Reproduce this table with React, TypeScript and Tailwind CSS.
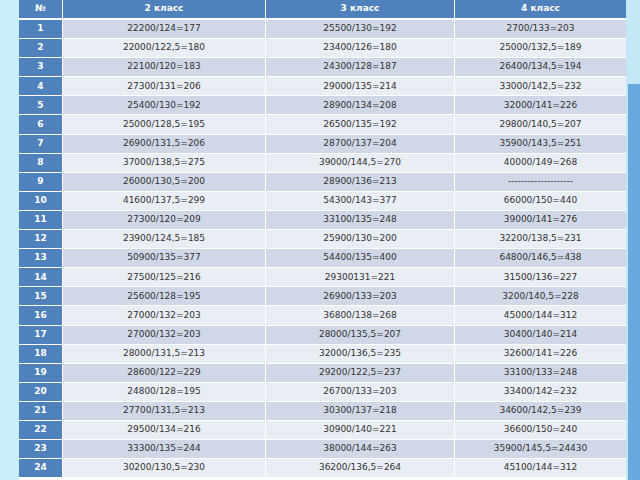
const rows: [string, string, string][] = [
  ["22200/124=177", "25500/130=192", "2700/133=203"],
  ["22000/122,5=180", "23400/126=180", "25000/132,5=189"],
  ["22100/120=183", "24300/128=187", "26400/134,5=194"],
  ["27300/131=206", "29000/135=214", "33000/142,5=232"],
  ["25400/130=192", "28900/134=208", "32000/141=226"],
  ["25000/128,5=195", "26500/135=192", "29800/140,5=207"],
  ["26900/131,5=206", "28700/137=204", "35900/143,5=251"],
  ["37000/138,5=275", "39000/144,5=270", "40000/149=268"],
  ["26000/130,5=200", "28900/136=213", "--------------------"],
  ["41600/137,5=299", "54300/143=377", "66000/150=440"],
  ["27300/120=209", "33100/135=248", "39000/141=276"],
  ["23900/124,5=185", "25900/130=200", "32200/138,5=231"],
  ["50900/135=377", "54400/135=400", "64800/146,5=438"],
  ["27500/125=216", "29300131=221", "31500/136=227"],
  ["25600/128=195", "26900/133=203", "3200/140,5=228"],
  ["27000/132=203", "36800/138=268", "45000/144=312"],
  ["27000/132=203", "28000/135,5=207", "30400/140=214"],
  ["28000/131,5=213", "32000/136,5=235", "32600/141=226"],
  ["28600/122=229", "29200/122,5=237", "33100/133=248"],
  ["24800/128=195", "26700/133=203", "33400/142=232"],
  ["27700/131,5=213", "30300/137=218", "34600/142,5=239"],
  ["29500/134=216", "30900/140=221", "36600/150=240"],
  ["33300/135=244", "38000/144=263", "35900/145,5=24430"],
  ["30200/130,5=230", "36200/136,5=264", "45100/144=312"],
];

export default function App() {
  return (
    <div
      className="w-[640px] h-[480px] overflow-hidden flex bg-[#c8eff7] text-[9px] text-[#333]"
      style={{ fontFamily: '"DejaVu Sans", sans-serif' }}
    >
      {/* table */}
      <div className="ml-[19px] w-[607px] flex flex-col bg-white">
        <div className="flex gap-px h-[18px] bg-white mb-[2px] text-white font-bold">
          <div className="w-[43px] bg-[#4f81bd] flex items-center justify-center">№</div>
          <div className="w-[202px] bg-[#4f81bd] flex items-center justify-center">2 класс</div>
          <div className="w-[188px] bg-[#4f81bd] flex items-center justify-center">3 класс</div>
          <div className="w-[171px] bg-[#4f81bd] flex items-center justify-center">4 класс</div>
        </div>
        {rows.map((r, i) => {
          const bg = i % 2 === 0 ? "bg-[#d0d8e8]" : "bg-[#e9edf4]";
          return (
            <div key={i} className="flex gap-px h-[18.1px] mb-px shrink-0">
              <div className="w-[43px] bg-[#4f81bd] text-white font-bold flex items-center justify-center">
                {i + 1}
              </div>
              <div className={`w-[202px] ${bg} flex items-center justify-center`}>{r[0]}</div>
              <div className={`w-[188px] ${bg} flex items-center justify-center`}>{r[1]}</div>
              <div className={`w-[171px] ${bg} flex items-center justify-center`}>{r[2]}</div>
            </div>
          );
        })}
      </div>
      {/* right edge */}
      <div className="flex-1 flex flex-col bg-[#c4e7f6]">
        <div className="h-[84px]" />
        <div className="flex-1 ml-[2px] bg-[#6aa9dd]" />
      </div>
    </div>
  );
}
